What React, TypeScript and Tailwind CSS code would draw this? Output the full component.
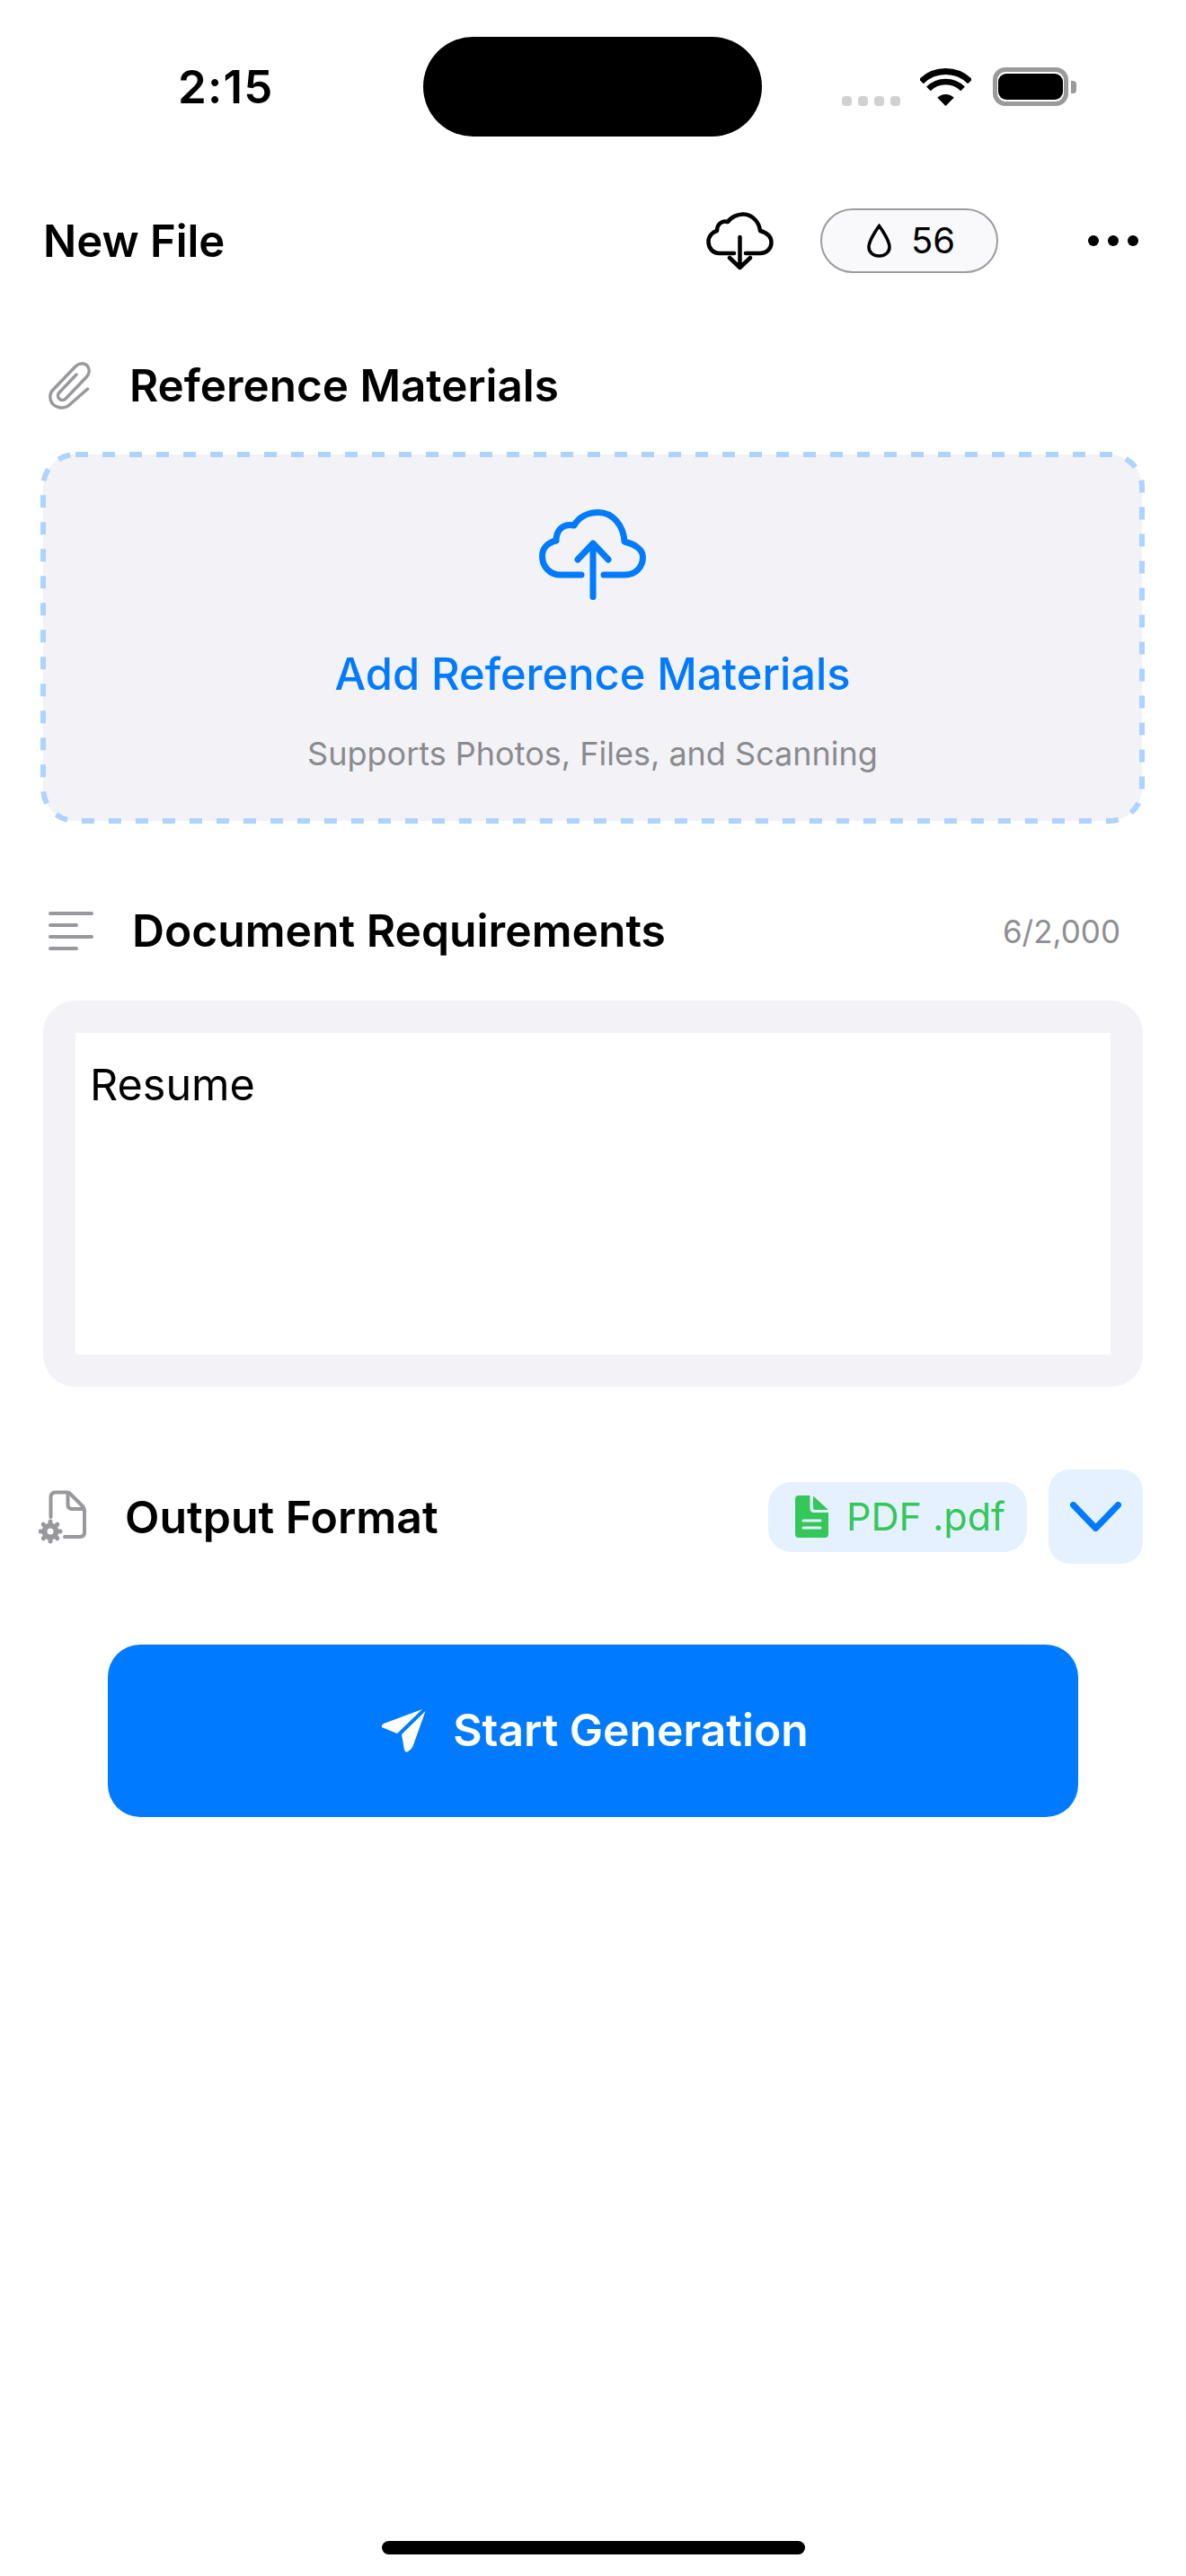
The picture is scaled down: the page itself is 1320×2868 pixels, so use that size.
const GEAR_TEETH = [0, 45, 90, 135, 180, 225, 270, 315];

function Wifi() {
  return (
    <svg width="57" height="42" viewBox="0 0 57 42" fill="none" stroke="#000">
      <path d="M1.3 14.8 A38.5 38.5 0 0 1 55.7 14.8" strokeWidth="7" />
      <path d="M9.4 22.9 A27 27 0 0 1 47.6 22.9" strokeWidth="6.5" />
      <path d="M28.5 42 L19.3 32.8 A13 13 0 0 1 37.7 32.8 Z" fill="#000" stroke="none" />
    </svg>
  );
}

function CloudDown() {
  return (
    <svg width="75" height="65" viewBox="0 0 75 65" fill="none" stroke="#000" strokeWidth="4.5" strokeLinecap="round" strokeLinejoin="round">
      <path d="M31 46 H15 C7 46 2.5 40 2.5 33 C2.5 27 7 22 12 21 C12 14 17 9 24 11 C27 6 35 2.5 41 2.5 C51 2.5 59 11 60 21 C67 23 72.5 27 72.5 34 C72.5 41 67 46 60 46 H44" />
      <path d="M37.5 28 V62 M26 51 L37.5 62 L49 51" />
    </svg>
  );
}

function CloudUp() {
  return (
    <svg width="119" height="101" viewBox="0 0 119 101" fill="none" stroke="#007aff" strokeWidth="7" strokeLinecap="round" strokeLinejoin="round">
      <path d="M47 73 H24 C12 73 3.5 64 3.5 52 C3.5 44 9 37 19 35 C19 24 26 15 39 18 C44 9 54 3.5 66 3.5 C82 3.5 94 18 95 36 C107 39 115.5 45 115.5 53 C115.5 65 107 73 95 73 H72" />
      <path d="M60 38 V97.5 M43 56 L60 38 L77 56" />
    </svg>
  );
}

function Clip() {
  return (
    <svg width="47" height="53" viewBox="0 0 47 53" fill="none" stroke="#98989d" strokeWidth="3.5" strokeLinecap="round" strokeLinejoin="round">
      <path d="M43.5 30 L23 48 C17 53 8 51 4 46 C1 41 1 35 5 31 L30 5 C34 1 40 1 43 4 C46 8 46 13 42 17 L19 41 C17 43 14 43 12 41 C10 39 10 36 12 34 L31 14" />
    </svg>
  );
}

function LinesIcon() {
  return (
    <svg width="50" height="44" viewBox="0 0 50 44" fill="none" stroke="#98989d" strokeWidth="4" strokeLinecap="round">
      <path d="M2 2 H48 M2 15 H31 M2 28 H48 M2 41 H31" />
    </svg>
  );
}

function FileGear() {
  return (
    <svg width="53" height="60" viewBox="0 0 53 60" fill="none" stroke="#98989d" strokeWidth="4" strokeLinecap="round" strokeLinejoin="round">
      <path d="M13.5 30 V8 Q13.5 2.5 19 2.5 H31 Q34 2.5 36 5 L49 18 Q51 20 51 23 V47 Q51 52 46 52 H29" />
      <path d="M32.5 3 V16 Q32.5 21 37 21 H50" />
      <circle cx="13" cy="46" r="6.5" strokeWidth="6" />
      {GEAR_TEETH.map((a) => (
        <path key={a} d="M13 36.5 V35" strokeWidth="5" transform={`rotate(${a} 13 46)`} />
      ))}
    </svg>
  );
}

function PdfIcon() {
  return (
    <svg width="37" height="47" viewBox="0 0 37 47">
      <path d="M4 0 H16.5 V14 Q16.5 19 21 19 H37 V43 Q37 47 33 47 H4 Q0 47 0 43 V4 Q0 0 4 0 Z" fill="#34c759" />
      <path d="M20 0.5 L37 16 H22 Q20 16 20 14 Z" fill="#34c759" />
      <path d="M9 28 H28 M9 36 H28" stroke="#e5f1fe" strokeWidth="3" strokeLinecap="round" />
    </svg>
  );
}

function SendIcon() {
  return (
    <svg width="50" height="50" viewBox="0 0 50 50" fill="#fff">
      <path d="M46 1 L3 17 Q0 19 1 21 L18 28 Z" />
      <path d="M49.5 3 L23 29 L26 46 Q27 50 30 48 Q34 46 36 41 Z" />
    </svg>
  );
}

export default function App() {
  return (
    <div className="relative flex h-[2868px] w-[1320px] flex-col overflow-hidden bg-white text-black [font-family:Inter,sans-serif]">
      {/* status bar */}
      <div className="mt-[41px] flex h-[111px] items-center">
        <span className="ml-[198px] w-[106px] text-[51px] leading-none font-semibold tracking-[1.2px]">2:15</span>
        <div className="ml-[167px] h-[111px] w-[377px] rounded-[56px] bg-black" />
        <div className="ml-[89px] flex h-[43px] items-end gap-[7px]">
          <span className="h-[11px] w-[11px] rounded-[4px] bg-[#d1d1d3]" />
          <span className="h-[11px] w-[11px] rounded-[4px] bg-[#d1d1d3]" />
          <span className="h-[11px] w-[11px] rounded-[4px] bg-[#d1d1d3]" />
          <span className="h-[11px] w-[11px] rounded-[4px] bg-[#d1d1d3]" />
        </div>
        <div className="ml-[22px]">
          <Wifi />
        </div>
        <div className="ml-[24px] flex h-[43px] w-[84px] items-center justify-center rounded-[14px] border-[5px] border-[#9a9a9c] bg-white">
          <div className="h-[29px] w-[72px] rounded-[9px] bg-black" />
        </div>
        <div className="ml-[3px] h-[14px] w-[6px] rounded-r-[4px] bg-[#9a9a9c]" />
      </div>

      {/* nav row */}
      <div className="mt-[80px] flex h-[72px] items-center pl-[48px]">
        <span className="w-[738px] text-[49px] leading-none font-semibold">New File</span>
        <CloudDown />
        <div className="ml-[52px] flex h-[72px] w-[198px] items-center rounded-[36px] border-2 border-[#9c9c9e] bg-[#f9f9fb] pl-[50px]">
          <svg width="27" height="38" viewBox="0 0 27 38" fill="none" stroke="#000" strokeWidth="3.5">
            <path d="M13.5 2.5 C13.5 2.5 2 18 2 26 C2 32 7 36 13.5 36 C20 36 25 32 25 26 C25 18 13.5 2.5 13.5 2.5 Z" />
          </svg>
          <span className="ml-[22px] text-[40px] leading-none font-normal">56</span>
        </div>
        <div className="ml-[100px] flex gap-[10px]">
          <span className="h-[12px] w-[12px] rounded-full bg-black" />
          <span className="h-[12px] w-[12px] rounded-full bg-black" />
          <span className="h-[12px] w-[12px] rounded-full bg-black" />
        </div>
      </div>

      {/* reference materials */}
      <div className="mt-[99px] flex h-[53px] items-center pl-[54px]">
        <Clip />
        <span className="ml-[43px] text-[49.4px] leading-none font-semibold">Reference Materials</span>
      </div>

      <div className="relative mt-[50px] ml-[48px] flex h-[408px] w-[1223px] flex-col items-center rounded-[36px] bg-[#f2f2f7]">
        <svg className="absolute inset-0 overflow-visible" width="1223" height="408" fill="none">
          <rect x="0" y="0" width="1223" height="408" rx="36" stroke="#aed3ff" strokeWidth="6" strokeDasharray="14 16" />
        </svg>
        <div className="mt-[61px]">
          <CloudUp />
        </div>
        <span className="mt-[59px] text-[48.8px] leading-none font-medium text-[#007aff]">Add Reference Materials</span>
        <span className="mt-[45px] text-[36px] leading-none font-normal text-[#8a8a8e]">Supports Photos, Files, and Scanning</span>
      </div>

      {/* document requirements */}
      <div className="mt-[101px] flex h-[44px] items-center pl-[54px]">
        <LinesIcon />
        <span className="ml-[43px] text-[49.8px] leading-none font-semibold">Document Requirements</span>
        <span className="ml-auto pr-[73px] text-[35px] leading-none text-[#8e8e93]">6/2,000</span>
      </div>

      <div className="mt-[55px] ml-[48px] h-[430px] w-[1224px] rounded-[36px] bg-[#f2f2f7] p-[36px]">
        <div className="h-full bg-white pt-[30px] pl-[16px] text-[48.5px] leading-[56px]">Resume</div>
      </div>

      {/* output format */}
      <div className="mt-[92px] flex h-[105px] items-center pl-[43px]">
        <FileGear />
        <span className="ml-[43px] w-[716px] text-[50px] leading-none font-semibold">Output Format</span>
        <div className="flex h-[78px] w-[288px] items-center rounded-[26px] bg-[#e5f1fe] pl-[30px]">
          <PdfIcon />
          <span className="ml-[20px] text-[43px] leading-none text-[#34c759]">PDF .pdf</span>
        </div>
        <div className="ml-[24px] flex h-[105px] w-[105px] items-center justify-center rounded-[24px] bg-[#e5f1fe]">
          <svg width="57" height="33" viewBox="0 0 57 33" fill="none" stroke="#007aff" strokeWidth="7" strokeLinecap="round" strokeLinejoin="round">
            <path d="M3.5 3.5 L28.5 29.5 L53.5 3.5" />
          </svg>
        </div>
      </div>

      <div className="mt-[90px] ml-[120px] flex h-[192px] w-[1080px] items-center justify-center gap-[30px] rounded-[36px] bg-[#007aff] pl-[4px]">
        <SendIcon />
        <span className="text-[49.8px] leading-none font-semibold text-white">Start Generation</span>
      </div>

      <div className="mt-auto mb-[24px] ml-[425px] h-[15px] w-[471px] rounded-full bg-black" />
    </div>
  );
}
